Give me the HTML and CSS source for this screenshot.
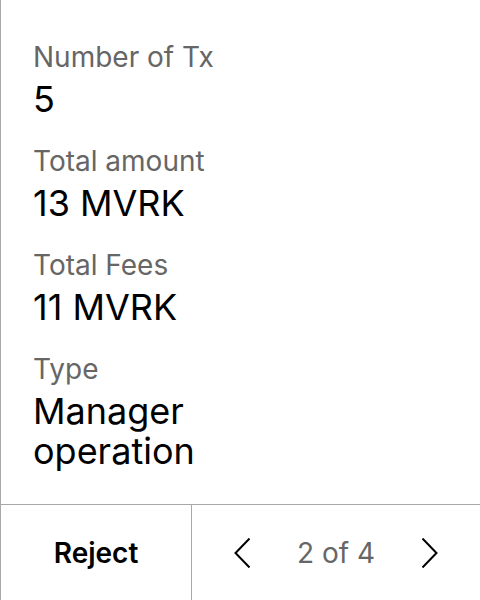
FILE: index.html
```html
<!DOCTYPE html>
<html lang="en">
<head>
<meta charset="utf-8">
<title>Transaction summary</title>
<link rel="stylesheet" href="styles.css">
</head>
<body>
<div class="screen">
  <main class="details">
    <div class="field">
      <div class="label">Number of Tx</div>
      <div class="value">5</div>
    </div>
    <div class="field">
      <div class="label">Total amount</div>
      <div class="value">13 MVRK</div>
    </div>
    <div class="field">
      <div class="label">Total Fees</div>
      <div class="value">11 MVRK</div>
    </div>
    <div class="field">
      <div class="label">Type</div>
      <div class="value">Manager operation</div>
    </div>
  </main>
  <footer class="footer">
    <div class="reject">Reject</div>
    <div class="pager">
      <svg class="chev" width="16" height="30" viewBox="0 0 16 30"><path d="M15.5 0.5 L1.5 15 L15.5 29.5" fill="none" stroke="#000" stroke-width="2"/></svg>
      <span class="count">2 of 4</span>
      <svg class="chev" width="16" height="30" viewBox="0 0 16 30"><path d="M0.5 0.5 L14.5 15 L0.5 29.5" fill="none" stroke="#000" stroke-width="2"/></svg>
    </div>
  </footer>
</div>
</body>
</html>
```
FILE: styles.css
```css
html, body {
  margin: 0;
  padding: 0;
  background: #fff;
}
body {
  font-family: Inter, "Noto Sans", sans-serif;
  color: #000;
}
.screen {
  width: 480px;
  height: 600px;
  box-sizing: border-box;
  border-left: 1px solid #a8a8a8;
  display: flex;
  flex-direction: column;
}
.details {
  flex: 1;
  padding: 40px 0 0 32px;
  width: 240px;
  display: flex;
  flex-direction: column;
  gap: 25px;
}
.field {
  display: flex;
  flex-direction: column;
  gap: 5px;
}
.label {
  font-size: 28px;
  line-height: 34px;
  color: #666;
}
.value {
  font-size: 36px;
  line-height: 40px;
  color: #000;
}
.footer {
  height: 96px;
  flex: none;
  box-sizing: border-box;
  border-top: 1px solid #a8a8a8;
  display: grid;
  grid-template-columns: 191px 1fr;
}
.reject {
  border-right: 1px solid #a8a8a8;
  display: flex;
  align-items: center;
  justify-content: center;
  font-size: 28px;
  font-weight: 600;
}
.pager {
  display: flex;
  align-items: center;
  justify-content: space-between;
  padding: 0 42px;
}
.count {
  font-size: 28px;
  color: #666;
}
.chev {
  display: block;
}
```
